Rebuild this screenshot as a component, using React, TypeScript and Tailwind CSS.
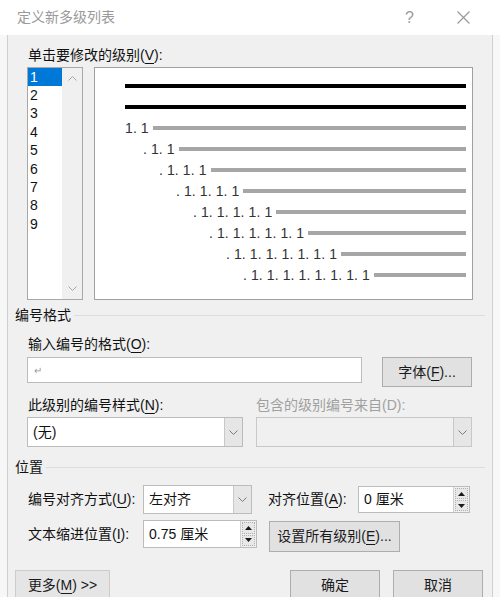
import React from "react";

const Key = ({ children }: { children: React.ReactNode }) => (
  <span className="underline underline-offset-[3px] decoration-1">{children}</span>
);

const ChevronDown = () => (
  <svg width="9" height="5" viewBox="0 0 9 5" fill="none">
    <polyline points="0.5,0.5 4.5,4.5 8.5,0.5" stroke="#7a7a7a" strokeWidth="1" />
  </svg>
);

const ChevronUp = () => (
  <svg width="9" height="5" viewBox="0 0 9 5" fill="none">
    <polyline points="0.5,4.5 4.5,0.5 8.5,4.5" stroke="#a8a8a8" strokeWidth="1" />
  </svg>
);

const Spin = ({ value, className }: { value: string; className: string }) => (
  <div className={`flex border border-[#bcbcbc] bg-white ${className}`}>
    <div className="flex flex-1 items-center pl-[5px] text-[14px]">{value}</div>
    <div className="flex w-[16px] flex-col gap-[1px] border-l border-[#d0d0d0] bg-[#f0f0f0] p-[1px]">
      <div className="flex flex-1 items-center justify-center border border-dotted border-[#b0b0b0] bg-[#e8e8e8]">
        <svg width="7" height="4" viewBox="0 0 7 4">
          <polygon points="0,4 3.5,0 7,4" fill="#1a1a1a" />
        </svg>
      </div>
      <div className="flex flex-1 items-center justify-center border border-dotted border-[#b0b0b0] bg-[#e8e8e8]">
        <svg width="7" height="4" viewBox="0 0 7 4">
          <polygon points="0,0 7,0 3.5,4" fill="#1a1a1a" />
        </svg>
      </div>
    </div>
  </div>
);

const Select = ({ value, className, disabled }: { value: string; className: string; disabled?: boolean }) => (
  <div
    className={`flex border ${disabled ? "border-[#c8c8c8] bg-[#f0f0f0]" : "border-[#bcbcbc] bg-white"} ${className}`}
  >
    <div className="flex flex-1 items-center pl-[5px] text-[14px]">{value}</div>
    <div className="flex w-[18px] items-center justify-center border-l border-[#c8c8c8] bg-[#e6e6e6]">
      <ChevronDown />
    </div>
  </div>
);

const Button = ({ children, className }: { children: React.ReactNode; className: string }) => (
  <div
    className={`flex items-center justify-center border border-[#adadad] bg-[#e1e1e1] text-[14px] text-[#1a1a1a] ${className}`}
  >
    {children}
  </div>
);

const GroupTitle = ({ children, className }: { children: React.ReactNode; className: string }) => (
  <div className={`flex h-[20px] items-center pl-[7px] pr-[7px] ${className}`}>
    <span className="text-[14px] leading-[20px]">{children}</span>
    <div className="ml-[3px] h-px flex-1 bg-[#dcdcdc]" />
  </div>
);

const levels = [
  { text: "1. 1", indent: "ml-0" },
  { text: ". 1. 1", indent: "ml-[18px]" },
  { text: ". 1. 1. 1", indent: "ml-[34px]" },
  { text: ". 1. 1. 1. 1", indent: "ml-[51px]" },
  { text: ". 1. 1. 1. 1. 1", indent: "ml-[68px]" },
  { text: ". 1. 1. 1. 1. 1. 1", indent: "ml-[84px]" },
  { text: ". 1. 1. 1. 1. 1. 1. 1", indent: "ml-[101px]" },
  { text: ". 1. 1. 1. 1. 1. 1. 1. 1", indent: "ml-[118px]" },
];

export default function App() {
  return (
    <div className="flex h-[597px] w-[500px] flex-col overflow-hidden bg-[#f7f7f7] font-['Liberation_Sans','Noto_Sans_CJK_SC',sans-serif] text-[#111]">
      {/* title bar */}
      <div className="flex h-[35px] shrink-0 items-center bg-white pl-[17px]">
        <span className="text-[14px] text-[#9a9a9a]">定义新多级列表</span>
        <span className="ml-auto text-[16px] text-[#9a9a9a]">?</span>
        <svg className="ml-[43px] mr-[30px]" width="13" height="13" viewBox="0 0 13 13">
          <path d="M0.5 0.5 L12.5 12.5 M12.5 0.5 L0.5 12.5" stroke="#9a9a9a" strokeWidth="1.2" />
        </svg>
      </div>

      {/* body */}
      <div className="ml-[7px] flex h-[562px] w-[486px] flex-col border-x border-[#cfcfcf] bg-[#f0f0f0] pt-[10px]">
        <div className="h-[20px] pl-[20px] text-[14px] leading-[20px]">
          单击要修改的级别(<Key>V</Key>):
        </div>

        <div className="mt-[2px] flex pl-[19px]">
          {/* level list */}
          <div className="flex h-[233px] w-[56px] border border-[#a8a8a8] bg-white">
            <div className="flex flex-1 flex-col text-[14px]">
              {[1, 2, 3, 4, 5, 6, 7, 8, 9].map((n) => (
                <div
                  key={n}
                  className={`flex h-[18.4px] items-center pl-[2px] ${n === 1 ? "bg-[#0078d7] text-white" : ""}`}
                >
                  {n}
                </div>
              ))}
            </div>
            <div className="flex w-[20px] flex-col items-center justify-between bg-[#f0f0f0] py-[8px]">
              <ChevronUp />
              <svg width="9" height="5" viewBox="0 0 9 5" fill="none">
                <polyline points="0.5,0.5 4.5,4.5 8.5,0.5" stroke="#a8a8a8" strokeWidth="1" />
              </svg>
            </div>
          </div>

          {/* preview */}
          <div className="ml-[11px] h-[233px] w-[379px] border border-[#a0a0a0] bg-white pl-[30px] pr-[6px] pt-[7px]">
            <div className="flex h-[21px] items-center">
              <div className="h-[4px] w-full bg-black" />
            </div>
            <div className="flex h-[21px] items-center">
              <div className="h-[4px] w-full bg-black" />
            </div>
            {levels.map((l) => (
              <div key={l.text} className="flex h-[21px] items-center">
                <span
                  className={`${l.indent} whitespace-pre text-[14px] leading-none tracking-[0.1px] text-[#333]`}
                >
                  {l.text}
                </span>
                <div className="ml-[4px] h-[4px] flex-1 bg-[#a6a6a6]" />
              </div>
            ))}
          </div>
        </div>

        <GroupTitle className="mt-[5px]">编号格式</GroupTitle>

        <div className="mt-[9px] h-[20px] pl-[20px] text-[14px] leading-[20px]">
          输入编号的格式(<Key>O</Key>):
        </div>
        <div className="mt-[3px] flex items-start pl-[19px]">
          <div className="flex h-[26px] w-[335px] items-center border border-[#bcbcbc] bg-white pl-[6px] text-[10px] text-[#9a9a9a]">
            ↵
          </div>
          <Button className="ml-[20px] h-[30px] w-[90px]">
            字体(<Key>F</Key>)...
          </Button>
        </div>

        <div className="mt-[8px] flex h-[20px] text-[14px] leading-[20px]">
          <div className="w-[248px] pl-[20px]">
            此级别的编号样式(<Key>N</Key>):
          </div>
          <div className="text-[#a0a0a0]">包含的级别编号来自(D):</div>
        </div>
        <div className="mt-[2px] flex pl-[19px]">
          <Select value="(无)" className="h-[30px] w-[216px]" />
          <Select value="" disabled className="ml-[13px] h-[30px] w-[216px]" />
        </div>

        <GroupTitle className="mt-[10px]">位置</GroupTitle>

        <div className="mt-[8px] flex h-[29px] items-center pl-[20px] text-[14px]">
          <div className="w-[115px]">
            编号对齐方式(<Key>U</Key>):
          </div>
          <Select value="左对齐" className="h-[29px] w-[109px]" />
          <div className="ml-[16px] w-[90px]">
            对齐位置(<Key>A</Key>):
          </div>
          <Spin value="0 厘米" className="h-[27px] w-[112px]" />
        </div>

        <div className="mt-[6px] flex items-start pl-[20px] text-[14px]">
          <div className="h-[28px] w-[115px] leading-[28px]">
            文本缩进位置(<Key>I</Key>):
          </div>
          <Spin value="0.75 厘米" className="h-[28px] w-[114px]" />
          <Button className="ml-[12px] mt-[1px] h-[31px] w-[131px]">
            设置所有级别(<Key>E</Key>)...
          </Button>
        </div>

        <div className="mt-[18px] flex pl-[7px]">
          <Button className="h-[30px] w-[95px] border-[#cccccc] bg-[#e5e5e5]">
            更多(<Key>M</Key>) &gt;&gt;
          </Button>
          <Button className="ml-[180px] h-[30px] w-[90px]">确定</Button>
          <Button className="ml-[13px] h-[30px] w-[90px]">取消</Button>
        </div>
      </div>
    </div>
  );
}
